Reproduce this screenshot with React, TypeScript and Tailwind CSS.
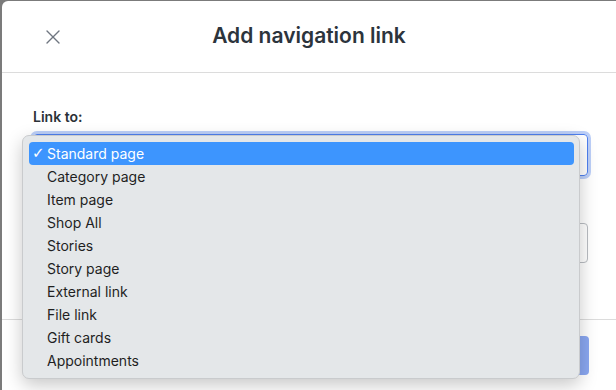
import { X } from "lucide-react"

const options = [
  "Standard page",
  "Category page",
  "Item page",
  "Shop All",
  "Stories",
  "Story page",
  "External link",
  "File link",
  "Gift cards",
  "Appointments",
]

function OptionMenu() {
  return (
    <div className="absolute left-[-11px] top-[1px] w-[558px] rounded-[7px] border border-[#c9cbcd] bg-[#e4e7e9] pb-[6px] pl-[6px] pr-[5px] pt-[6px] shadow-[0_6px_18px_rgba(0,0,0,0.22)] font-['Inter',sans-serif] text-[14px]">
      {options.map((label, i) =>
        i === 0 ? (
          <div key={label} className="flex h-[23px] items-center rounded-[4px] bg-[#3d95fe] text-white">
            <span className="w-[18px] pl-[3px] text-[15px] font-['DejaVu_Sans',sans-serif]">✓</span>
            <span>{label}</span>
          </div>
        ) : (
          <div key={label} className="flex h-[23px] items-center text-[#1f1f1f]">
            <span className="w-[18px]" />
            <span>{label}</span>
          </div>
        )
      )}
    </div>
  )
}

export default function App() {
  return (
    <div className="h-[390px] w-[616px] overflow-hidden bg-[#7b7b7b] pl-[2px] pt-px">
      <div className="h-full w-full rounded-tl-[6px] bg-white font-['Inter',sans-serif]">
        <div className="relative flex h-[72px] items-center justify-center border-b border-[#dcdcdc]">
          <X className="absolute left-[39px] top-[24px] h-[24px] w-[24px] text-[#6f7680]" strokeWidth={1.4} />
          <h1 className="pb-[2px] text-[21px] font-semibold text-[#2c343c]">Add navigation link</h1>
        </div>

        <div className="pl-[31px] pr-[28px] pt-[34px]">
          <label className="block text-[14px] font-semibold leading-[20px] text-[#2b3137]">Link to:</label>
          <div className="relative mt-[7px]">
            <div className="h-[42px] rounded-[4px] border border-[#4f80ef] ring-[3px] ring-[#bccff8]" />
            <OptionMenu />
          </div>
          <div className="mt-[47px] h-[40px] rounded-[4px] border border-[#b9bdc2]" />
        </div>

        <div className="mt-[56px] flex justify-end gap-[12px] border-t border-[#dcdcdc] pr-[27px] pt-[16px]">
          <button className="h-[39px] w-[68px] rounded-[4px] border border-[#8c9196] text-[14px] font-semibold text-[#2b3137]">
            Cancel
          </button>
          <button className="h-[39px] w-[64px] rounded-[4px] bg-[#8aa7f1] text-[14px] font-semibold text-white">
            Add
          </button>
        </div>
      </div>
    </div>
  )
}
